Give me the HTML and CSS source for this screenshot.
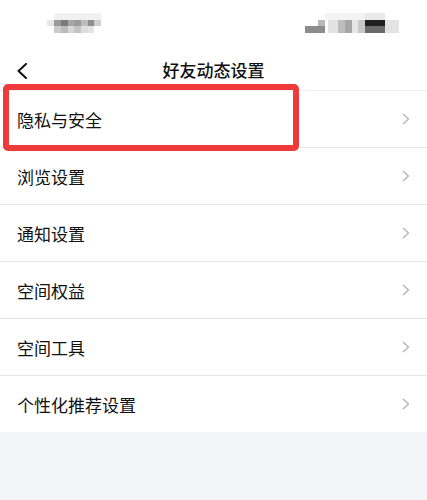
FILE: index.html
```
<!DOCTYPE html>
<html lang="zh-CN">
<head>
<meta charset="utf-8">
<title>好友动态设置</title>
<link rel="stylesheet" href="styles.css">
</head>
<body>
<div class="screen">
  <div class="status">
    <svg class="mosaic-left" width="54" height="20" viewBox="0 0 54 20">
      <rect x="7" y="0" width="47" height="7" fill="#f1f1f1"/>
      <rect x="0" y="7" width="7" height="6" fill="#e6e6e6"/>
      <rect x="7" y="7" width="7" height="6" fill="#9a9a9a"/>
      <rect x="14" y="7" width="7" height="6" fill="#7a7a7a"/>
      <rect x="21" y="7" width="6" height="6" fill="#a8a8a8"/>
      <rect x="27" y="7" width="7" height="6" fill="#9c9c9c"/>
      <rect x="34" y="7" width="7" height="6" fill="#bdbdbd"/>
      <rect x="41" y="7" width="6" height="6" fill="#8e8e8e"/>
      <rect x="47" y="7" width="7" height="6" fill="#cfcfcf"/>
      <rect x="7" y="13" width="7" height="7" fill="#cacaca"/>
      <rect x="14" y="13" width="7" height="7" fill="#bbbbbb"/>
      <rect x="21" y="13" width="6" height="7" fill="#d6d6d6"/>
      <rect x="27" y="13" width="7" height="7" fill="#c4c4c4"/>
      <rect x="34" y="13" width="7" height="7" fill="#dedede"/>
      <rect x="41" y="13" width="6" height="7" fill="#e4e4e4"/>
    </svg>
    <svg class="mosaic-right" width="94" height="20" viewBox="0 0 94 20">
      <rect x="13" y="7" width="7" height="6" fill="#b8b8b8"/>
      <rect x="0" y="13" width="20" height="7" fill="#8c8c8c"/>
      <rect x="20" y="0" width="47" height="7" fill="#f3f3f3"/>
      <rect x="23" y="7" width="10" height="13" fill="#e2e2e2"/>
      <rect x="33" y="7" width="7" height="13" fill="#bdbdbd"/>
      <rect x="40" y="7" width="7" height="13" fill="#a6a6a6"/>
      <rect x="47" y="7" width="6" height="13" fill="#e6e6e6"/>
      <rect x="53" y="7" width="7" height="13" fill="#c9c9c9"/>
      <rect x="60" y="0" width="20" height="7" fill="#e9e9e9"/>
      <rect x="60" y="7" width="20" height="6" fill="#1f1f1f"/>
      <rect x="60" y="13" width="20" height="7" fill="#6a6a6a"/>
      <rect x="80" y="7" width="14" height="13" fill="#e3e3e3"/>
    </svg>
  </div>
  <header class="nav">
    <svg class="back" width="12" height="16" viewBox="0 0 12 16">
      <polyline points="10,1 2.5,8 10,15" fill="none" stroke="#111" stroke-width="2" stroke-linecap="round" stroke-linejoin="round"/>
    </svg>
    <h1 class="title">好友动态设置</h1>
  </header>
  <ul class="list">
    <li class="row"><span>隐私与安全</span><svg class="arrow" width="8" height="12" viewBox="0 0 8 12"><polyline points="1,1 6.5,6 1,11" fill="none" stroke="#b3b3b3" stroke-width="1.3"/></svg></li>
    <li class="row"><span>浏览设置</span><svg class="arrow" width="8" height="12" viewBox="0 0 8 12"><polyline points="1,1 6.5,6 1,11" fill="none" stroke="#b3b3b3" stroke-width="1.3"/></svg></li>
    <li class="row"><span>通知设置</span><svg class="arrow" width="8" height="12" viewBox="0 0 8 12"><polyline points="1,1 6.5,6 1,11" fill="none" stroke="#b3b3b3" stroke-width="1.3"/></svg></li>
    <li class="row"><span>空间权益</span><svg class="arrow" width="8" height="12" viewBox="0 0 8 12"><polyline points="1,1 6.5,6 1,11" fill="none" stroke="#b3b3b3" stroke-width="1.3"/></svg></li>
    <li class="row"><span>空间工具</span><svg class="arrow" width="8" height="12" viewBox="0 0 8 12"><polyline points="1,1 6.5,6 1,11" fill="none" stroke="#b3b3b3" stroke-width="1.3"/></svg></li>
    <li class="row"><span>个性化推荐设置</span><svg class="arrow" width="8" height="12" viewBox="0 0 8 12"><polyline points="1,1 6.5,6 1,11" fill="none" stroke="#b3b3b3" stroke-width="1.3"/></svg></li>
  </ul>
  <div class="highlight"></div>
</div>
</body>
</html>
```
FILE: styles.css
```
html, body {
  margin: 0;
  padding: 0;
  background: #f4f5f8;
}
body {
  font-family: "Noto Sans CJK SC", "Noto Sans", sans-serif;
  color: #111;
}
.screen {
  position: relative;
  width: 427px;
}
.status {
  height: 50px;
  background: #fff;
  display: flex;
  justify-content: space-between;
  align-items: flex-start;
  padding: 13px 28px 0 47px;
  box-sizing: border-box;
}
.mosaic-left, .mosaic-right {
  display: block;
}
.nav {
  height: 40px;
  background: #fff;
  border-bottom: 1px solid #f0f0f0;
  display: flex;
  align-items: center;
  justify-content: center;
  position: relative;
}
.back {
  position: absolute;
  left: 16px;
  top: 13px;
}
.title {
  margin: 0;
  font-size: 17px;
  font-weight: 500;
  line-height: 40px;
  color: #111;
}
.list {
  list-style: none;
  margin: 0;
  padding: 0;
  background: #fff;
}
.row {
  height: 56px;
  display: flex;
  align-items: center;
  justify-content: space-between;
  padding: 0 17px 0 17px;
  border-bottom: 1px solid #e7e7e7;
  font-size: 17px;
  color: #111;
}
.row:last-child {
  border-bottom: none;
}
.arrow {
  display: block;
  margin-right: 0;
}
.highlight {
  position: absolute;
  left: 3px;
  top: 84px;
  width: 296px;
  height: 67px;
  border: 6px solid #ef3a3b;
  border-radius: 5px;
  box-sizing: border-box;
}
```
